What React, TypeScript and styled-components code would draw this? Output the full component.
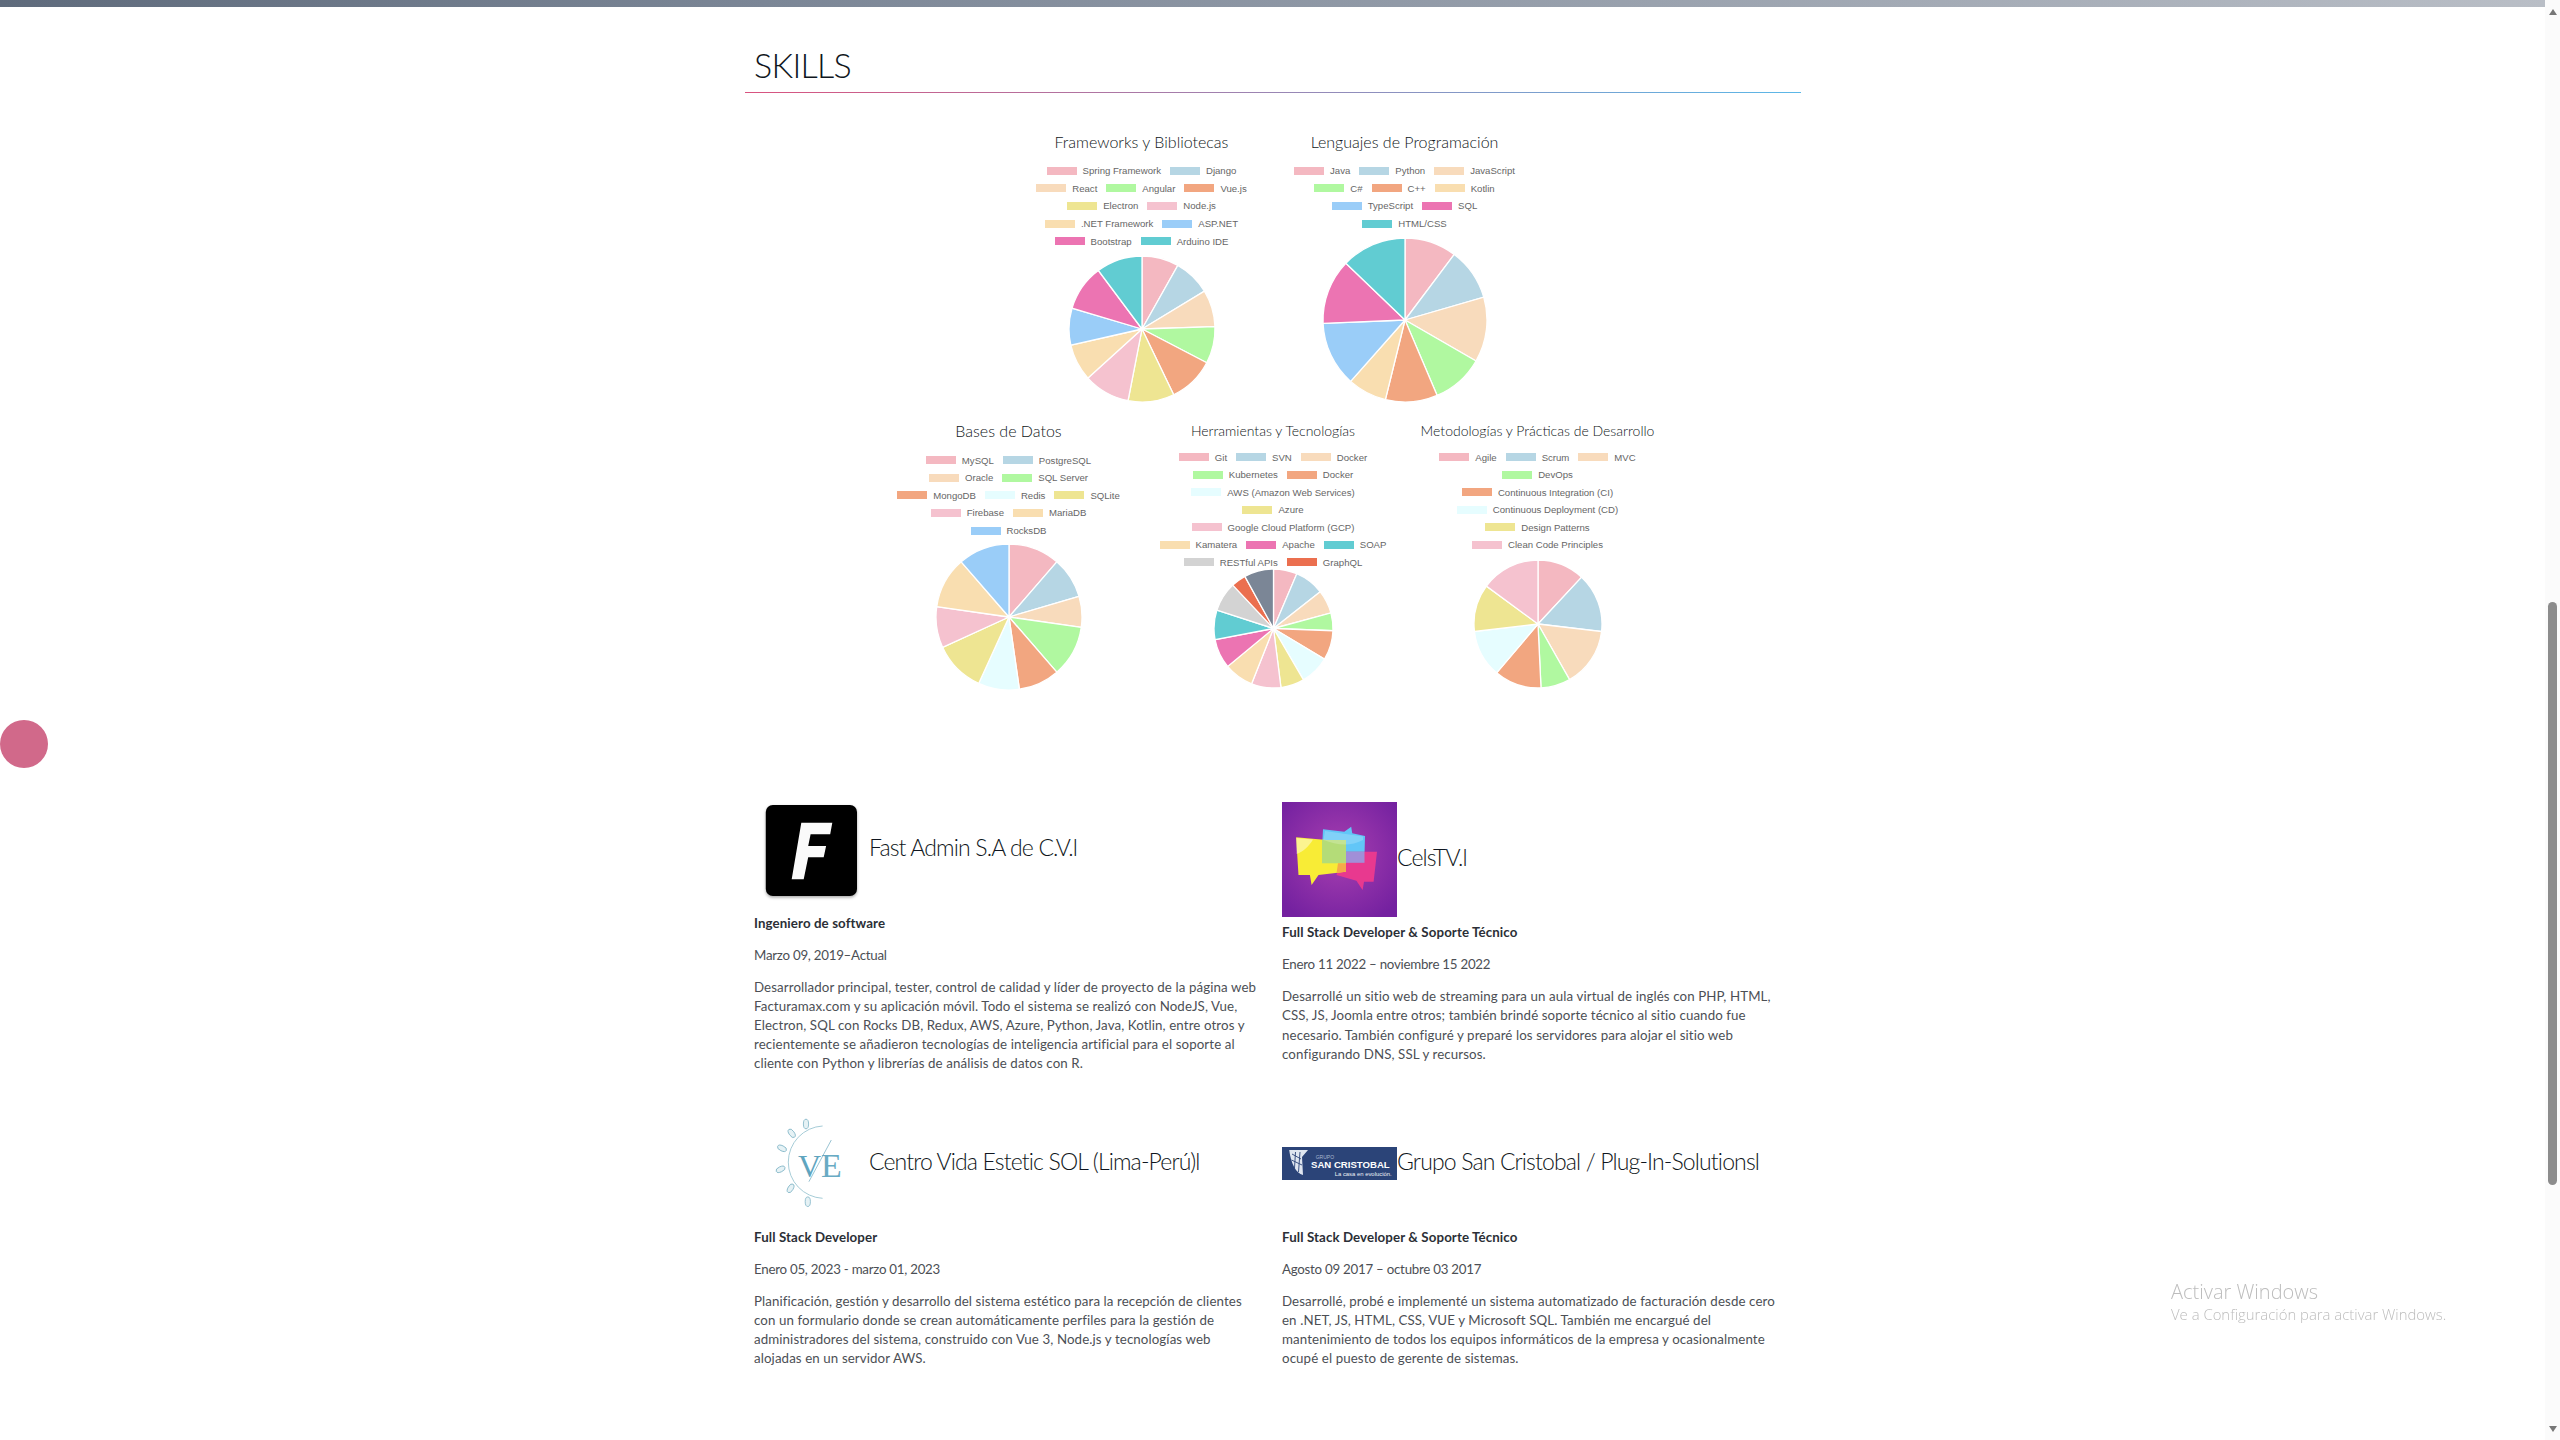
import styled, { createGlobalStyle } from 'styled-components'

const GlobalStyle = createGlobalStyle`
  html, body {
    margin: 0;
    padding: 0;
    background: #fff;
    overflow: hidden;
  }
`

const C = {
  pink: '#f4b8c1',
  blue: '#b6d6e4',
  cream: '#f8dbbc',
  green: '#b0f8a0',
  orange: '#f2a680',
  light: '#e6fdff',
  yellow: '#eee592',
  rose: '#f5c2cf',
  sand: '#f9deb0',
  sky: '#9acdf8',
  magenta: '#ec74b2',
  teal: '#61ccd2',
  gray: '#d3d3d3',
  red: '#eb6f4f',
  slate: '#7b8696',
}

const Page = styled.div`
  display: flex;
  width: 2560px;
  height: 1440px;
  overflow: hidden;
  font-family: Lato, 'Liberation Sans', sans-serif;
`

const Main = styled.main`
  flex: 1;
  padding-left: 1px;
`

const Container = styled.div`
  width: 1056px;
  margin: 0 auto;
`

const Heading = styled.h2`
  margin: 0;
  height: 92px;
  padding: 44px 0 0 9px;
  box-sizing: border-box;
  font-size: 34px;
  line-height: 42px;
  font-weight: 300;
  letter-spacing: -0.7px;
  color: #0f1620;
`

const Divider = styled.div`
  height: 1px;
  background: linear-gradient(90deg, #d9537f, #5bb8e8);
`

const ChartRow = styled.div<{ $top: number }>`
  display: flex;
  justify-content: center;
  margin-top: ${({ $top }) => $top}px;
`

const Chart = styled.section<{ $width: number }>`
  display: flex;
  flex: none;
  flex-direction: column;
  align-items: center;
  width: ${({ $width }) => $width}px;
`

const ChartTitle = styled.h4<{ $small?: boolean }>`
  margin: 0 0 ${({ $small }) => ($small ? 4 : 7)}px;
  height: 26px;
  line-height: 26px;
  font-weight: 300;
  white-space: nowrap;
  color: #0f1620;
  font-size: ${({ $small }) => ($small ? 14 : 16)}px;
`

const LegendRow = styled.div<{ $small?: boolean }>`
  display: flex;
  justify-content: center;
  align-items: center;
  gap: 9px;
  height: ${({ $small }) => ($small ? 17.5 : 17.6)}px;
  white-space: nowrap;
  font-family: 'Liberation Sans', Arial, sans-serif;
  font-size: 9.6px;
  color: #666;
`

const LegendItem = styled.span`
  display: flex;
  align-items: center;
`

const Swatch = styled.i<{ $color: string }>`
  display: block;
  width: 30px;
  height: 8px;
  margin-right: 6px;
  background: ${({ $color }) => $color};
`

const PieSvg = styled.svg<{ $gap: number }>`
  display: block;
  flex: none;
  margin-top: ${({ $gap }) => $gap}px;
`

type Entry = [string, string]

interface PieProps {
  readonly title: string
  readonly width: number
  readonly rows: ReadonlyArray<ReadonlyArray<Entry>>
  readonly values: ReadonlyArray<number>
  readonly colors: ReadonlyArray<string>
  readonly radius: number
  readonly gap: number
  readonly small?: boolean
}

const slicePaths = (values: ReadonlyArray<number>, r: number) => {
  const total = values.reduce((a, b) => a + b, 0)
  const c = r + 2
  let acc = 0
  return values.map(v => {
    const a0 = (acc / total) * Math.PI * 2
    acc += v
    const a1 = (acc / total) * Math.PI * 2
    const x0 = c + r * Math.sin(a0)
    const y0 = c - r * Math.cos(a0)
    const x1 = c + r * Math.sin(a1)
    const y1 = c - r * Math.cos(a1)
    return `M${c} ${c}L${x0.toFixed(2)} ${y0.toFixed(2)}A${r} ${r} 0 0 1 ${x1.toFixed(2)} ${y1.toFixed(2)}Z`
  })
}

const PieChart = ({ title, width, rows, values, colors, radius, gap, small }: PieProps) => (
  <Chart $width={width}>
    <ChartTitle $small={small}>{title}</ChartTitle>
    <div>
      {rows.map((row, i) => (
        <LegendRow key={i} $small={small}>
          {row.map(([label, color], j) => (
            <LegendItem key={j}>
              <Swatch $color={color} />
              {label}
            </LegendItem>
          ))}
        </LegendRow>
      ))}
    </div>
    <PieSvg $gap={gap} width={radius * 2 + 4} height={radius * 2 + 4}>
      {slicePaths(values, radius).map((d, i) => (
        <path key={i} d={d} fill={colors[i]} stroke="#fff" strokeWidth={1.3} />
      ))}
    </PieSvg>
  </Chart>
)

const JobGrid = styled.div`
  display: grid;
  grid-template-columns: 528px 528px;
  align-items: center;
  row-gap: 33px;
  margin-top: 100px;
`

const Job = styled.article`
  padding-left: 9px;
`

const JobHeader = styled.header`
  display: flex;
  align-items: center;
  height: 115px;
`

const LogoSvg = styled.svg`
  display: block;
  flex: none;
`

const CompanyName = styled.h3`
  margin: 0 0 5px;
  font-size: 23px;
  font-weight: 300;
  line-height: 30px;
  letter-spacing: -0.85px;
  white-space: nowrap;
  color: #0f1620;
`

const Role = styled.p`
  margin: 6.5px 0 13px;
  font-size: 13.3px;
  line-height: 19px;
  font-weight: 700;
  letter-spacing: 0.1px;
  color: #2b2f36;
`

const Period = styled.p`
  margin: 0 0 13px;
  font-size: 13.3px;
  line-height: 19px;
  letter-spacing: -0.25px;
  color: #4c4f55;
`

const Description = styled.p`
  margin: 0;
  color: #4c4f55;
  font-size: 13.3px;
  line-height: 19.1px;
  letter-spacing: 0.1px;
`

const DescLine = styled.span`
  display: block;
  white-space: nowrap;
`

const FastLogo = () => (
  <LogoSvg width={115} height={115} viewBox="0 0 115 115">
    <defs>
      <filter id="fastShadow" x="-10%" y="-10%" width="120%" height="120%">
        <feDropShadow dx="0" dy="1.5" stdDeviation="1.5" floodOpacity="0.35" />
      </filter>
    </defs>
    <rect x="11.8" y="13" width="91.2" height="91" rx="7" fill="#000" filter="url(#fastShadow)" />
    <path d="M47.3 30.7H78.3L76.2 42.3H56.6L54.2 54H72.1L69.7 65.3H54.2L49.7 87.3H37.7Z" fill="#fafafa" />
  </LogoSvg>
)

const CelsLogo = () => (
  <LogoSvg width={115} height={115} viewBox="0 0 115 115">
    <defs>
      <radialGradient id="celsBg" cx="50%" cy="45%" r="65%">
        <stop offset="0%" stopColor="#a83fb0" />
        <stop offset="100%" stopColor="#7421a0" />
      </radialGradient>
    </defs>
    <rect width="115" height="115" fill="url(#celsBg)" />
    <path d="M41 27.3L62.3 29.7L69.2 24.7L70.2 31.3L83 34L82.3 60.7L39.3 61.3Z" fill="#62c6f7" />
    <path d="M54.4 73L64 49.7H95L91.6 79.7H82L80.6 88L74.4 78.7Z" fill="#e8398f" />
    <path d="M14.1 35.3L64 39.7V69.7L36.5 73L29.6 83L27.9 73H16.5Z" fill="#f8ec36" />
    <rect x="40" y="38" width="24" height="23.3" fill="#b4dc78" />
    <rect x="64" y="50" width="18.5" height="10.8" fill="#a18fd8" />
    <path d="M56 61.3H64V69.7L54.6 70.8Z" fill="#f5a94a" />
    <path d="M14.3 36L31 37.5C27 44 21 50 14.6 52Z" fill="#fff" opacity="0.45" />
    <path d="M43 29L81 34.5V38C68 45 54 43 41.5 38Z" fill="#fff" opacity="0.2" />
  </LogoSvg>
)

const VidaLogo = () => {
  const leaves: ReadonlyArray<[number, number, number]> = [
    [52, 18, 0],
    [37.7, 27.3, -35],
    [28, 42.3, -65],
    [26.6, 63.3, 65],
    [36.6, 82.3, 30],
    [53.8, 95.7, 0],
  ]
  return (
    <LogoSvg width={115} height={115} viewBox="0 0 115 115">
      <path d="M68.6 20A36.2 36.2 0 0 0 68.6 92.3" fill="none" stroke="#9cc6d3" strokeWidth="0.9" />
      {leaves.map(([x, y, r], i) => (
        <ellipse
          key={i}
          cx={x}
          cy={y}
          rx="2.6"
          ry="4.8"
          fill="#e6f2f5"
          stroke="#7fb4c6"
          strokeWidth="0.8"
          transform={`rotate(${r} ${x} ${y})`}
        />
      ))}
      <path d="M77.3 34L54.9 75.7" stroke="#7fb4c6" strokeWidth="0.8" />
      <text x="44" y="71.3" fontFamily="'Liberation Serif', serif" fontSize="32" fill="#5fa5bf">
        V
      </text>
      <text x="67" y="71.3" fontFamily="'Liberation Serif', serif" fontSize="34" fill="#69abc4">
        E
      </text>
    </LogoSvg>
  )
}

const CristobalLogo = () => (
  <LogoSvg width={115} height={33} viewBox="0 0 115 33">
    <rect width="115" height="33" fill="#2b4478" />
    <path d="M7.2 3H26L20 10L21 28C14 26 9 17 7.2 3Z" fill="#dfe6f0" />
    <path d="M10 7L19 12M9.5 13L20 18M13.5 5L12.5 21M18 5L16.5 25" stroke="#2b4478" strokeWidth="0.9" fill="none" />
    <text x="33.7" y="11.5" fontFamily="'Liberation Sans', sans-serif" fontSize="5" fill="#a9b7cf">
      GRUPO
    </text>
    <text x="29" y="21" fontFamily="'Liberation Sans', sans-serif" fontSize="9.6" fontWeight="700" fill="#fff">
      SAN CRISTOBAL
    </text>
    <text x="52.7" y="28.5" fontFamily="'Liberation Sans', sans-serif" fontSize="5.9" fill="#eef1f6">
      La casa en evolución.
    </text>
  </LogoSvg>
)

const ScrollTrack = styled.aside`
  display: flex;
  flex: none;
  flex-direction: column;
  align-items: center;
  width: 15px;
  height: 1440px;
  background: #fbfbfb;
`

const ArrowUp = styled.div`
  width: 0;
  height: 0;
  margin-top: 9px;
  border: 4.5px solid transparent;
  border-top: 0;
  border-bottom: 6px solid #777;
`

const ArrowDown = styled.div`
  width: 0;
  height: 0;
  margin-bottom: 8px;
  border: 4.5px solid transparent;
  border-bottom: 0;
  border-top: 6px solid #777;
`

const Thumb = styled.div`
  width: 9px;
  height: 583px;
  margin-top: 587px;
  margin-bottom: auto;
  border-radius: 5px;
  background: #8c8c8c;
`

const ProgressBar = styled.div`
  position: fixed;
  top: 0;
  left: 0;
  width: 2545px;
  height: 7px;
  background: linear-gradient(90deg, #5f6b7c, #7b8696 30%, #b9bec6);
`

const FloatingDot = styled.div`
  position: fixed;
  top: 720px;
  left: 0;
  width: 48px;
  height: 48px;
  border-radius: 50%;
  background: #d1698a;
`

const Watermark = styled.div`
  position: fixed;
  top: 1278px;
  left: 2171px;
  font-family: 'Open Sans', 'Noto Sans', sans-serif;
  font-weight: 300;
  color: #bdbdbd;
`

const WatermarkTitle = styled.div`
  font-size: 20px;
  line-height: 27px;
`

const WatermarkText = styled.div`
  font-size: 14.9px;
  line-height: 19px;
`

const rowsOf = (...rows: Entry[][]) => rows

const App = () => (
  <Page>
    <GlobalStyle />
    <ProgressBar />
    <FloatingDot />
    <Main>
      <Container>
        <Heading>SKILLS</Heading>
        <Divider />
        <ChartRow $top={36}>
          <PieChart
            title="Frameworks y Bibliotecas"
            width={263}
            radius={73}
            gap={4}
            values={[8, 8, 8, 8, 10, 10, 10, 8, 8, 10, 10]}
            colors={[C.pink, C.blue, C.cream, C.green, C.orange, C.yellow, C.rose, C.sand, C.sky, C.magenta, C.teal]}
            rows={rowsOf(
              [['Spring Framework', C.pink], ['Django', C.blue]],
              [['React', C.cream], ['Angular', C.green], ['Vue.js', C.orange]],
              [['Electron', C.yellow], ['Node.js', C.rose]],
              [['.NET Framework', C.sand], ['ASP.NET', C.sky]],
              [['Bootstrap', C.magenta], ['Arduino IDE', C.teal]],
            )}
          />
          <PieChart
            title="Lenguajes de Programación"
            width={263}
            radius={82}
            gap={4}
            values={[8, 8, 10, 8, 8, 6, 10, 10, 10]}
            colors={[C.pink, C.blue, C.cream, C.green, C.orange, C.sand, C.sky, C.magenta, C.teal]}
            rows={rowsOf(
              [['Java', C.pink], ['Python', C.blue], ['JavaScript', C.cream]],
              [['C#', C.green], ['C++', C.orange], ['Kotlin', C.sand]],
              [['TypeScript', C.sky], ['SQL', C.magenta]],
              [['HTML/CSS', C.teal]],
            )}
          />
        </ChartRow>
        <ChartRow $top={14}>
          <PieChart
            title="Bases de Datos"
            width={264.5}
            radius={73}
            gap={3}
            values={[10, 8, 6, 10, 8, 8, 10, 8, 10, 10]}
            colors={[C.pink, C.blue, C.cream, C.green, C.orange, C.light, C.yellow, C.rose, C.sand, C.sky]}
            rows={rowsOf(
              [['MySQL', C.pink], ['PostgreSQL', C.blue]],
              [['Oracle', C.cream], ['SQL Server', C.green]],
              [['MongoDB', C.orange], ['Redis', C.light], ['SQLite', C.yellow]],
              [['Firebase', C.rose], ['MariaDB', C.sand]],
              [['RocksDB', C.sky]],
            )}
          />
          <PieChart
            title="Herramientas y Tecnologías"
            width={264.5}
            radius={59.5}
            gap={-4}
            small
            values={[8, 10, 8, 6, 10, 10, 8, 10, 10, 10, 10, 10, 5, 10]}
            colors={[C.pink, C.blue, C.cream, C.green, C.orange, C.light, C.yellow, C.rose, C.sand, C.magenta, C.teal, C.gray, C.red, C.slate]}
            rows={rowsOf(
              [['Git', C.pink], ['SVN', C.blue], ['Docker', C.cream]],
              [['Kubernetes', C.green], ['Docker', C.orange]],
              [['AWS (Amazon Web Services)', C.light]],
              [['Azure', C.yellow]],
              [['Google Cloud Platform (GCP)', C.rose]],
              [['Kamatera', C.sand], ['Apache', C.magenta], ['SOAP', C.teal]],
              [['RESTful APIs', C.gray], ['GraphQL', C.red]],
            )}
          />
          <PieChart
            title="Metodologías y Prácticas de Desarrollo"
            width={264.5}
            radius={64}
            gap={5}
            small
            values={[8, 10, 10, 5, 8, 8, 8, 10]}
            colors={[C.pink, C.blue, C.cream, C.green, C.orange, C.light, C.yellow, C.rose]}
            rows={rowsOf(
              [['Agile', C.pink], ['Scrum', C.blue], ['MVC', C.cream]],
              [['DevOps', C.green]],
              [['Continuous Integration (CI)', C.orange]],
              [['Continuous Deployment (CD)', C.light]],
              [['Design Patterns', C.yellow]],
              [['Clean Code Principles', C.rose]],
            )}
          />
        </ChartRow>
        <JobGrid>
          <Job>
            <JobHeader>
              <FastLogo />
              <CompanyName>Fast Admin S.A de C.V.l</CompanyName>
            </JobHeader>
            <Role>Ingeniero de software</Role>
            <Period>Marzo 09, 2019–Actual</Period>
            <Description>
              <DescLine>Desarrollador principal, tester, control de calidad y líder de proyecto de la página web</DescLine>
              <DescLine>Facturamax.com y su aplicación móvil. Todo el sistema se realizó con NodeJS, Vue,</DescLine>
              <DescLine>Electron, SQL con Rocks DB, Redux, AWS, Azure, Python, Java, Kotlin, entre otros y</DescLine>
              <DescLine>recientemente se añadieron tecnologías de inteligencia artificial para el soporte al</DescLine>
              <DescLine>cliente con Python y librerías de análisis de datos con R.</DescLine>
            </Description>
          </Job>
          <Job>
            <JobHeader>
              <CelsLogo />
              <CompanyName>CelsTV.l</CompanyName>
            </JobHeader>
            <Role>Full Stack Developer &amp; Soporte Técnico</Role>
            <Period>Enero 11 2022 – noviembre 15 2022</Period>
            <Description>
              <DescLine>Desarrollé un sitio web de streaming para un aula virtual de inglés con PHP, HTML,</DescLine>
              <DescLine>CSS, JS, Joomla entre otros; también brindé soporte técnico al sitio cuando fue</DescLine>
              <DescLine>necesario. También configuré y preparé los servidores para alojar el sitio web</DescLine>
              <DescLine>configurando DNS, SSL y recursos.</DescLine>
            </Description>
          </Job>
          <Job>
            <JobHeader>
              <VidaLogo />
              <CompanyName>Centro Vida Estetic SOL (Lima-Perú)l</CompanyName>
            </JobHeader>
            <Role>Full Stack Developer</Role>
            <Period>Enero 05, 2023 - marzo 01, 2023</Period>
            <Description>
              <DescLine>Planificación, gestión y desarrollo del sistema estético para la recepción de clientes</DescLine>
              <DescLine>con un formulario donde se crean automáticamente perfiles para la gestión de</DescLine>
              <DescLine>administradores del sistema, construido con Vue 3, Node.js y tecnologías web</DescLine>
              <DescLine>alojadas en un servidor AWS.</DescLine>
            </Description>
          </Job>
          <Job>
            <JobHeader>
              <CristobalLogo />
              <CompanyName>Grupo San Cristobal / Plug-In-Solutionsl</CompanyName>
            </JobHeader>
            <Role>Full Stack Developer &amp; Soporte Técnico</Role>
            <Period>Agosto 09 2017 – octubre 03 2017</Period>
            <Description>
              <DescLine>Desarrollé, probé e implementé un sistema automatizado de facturación desde cero</DescLine>
              <DescLine>en .NET, JS, HTML, CSS, VUE y Microsoft SQL. También me encargué del</DescLine>
              <DescLine>mantenimiento de todos los equipos informáticos de la empresa y ocasionalmente</DescLine>
              <DescLine>ocupé el puesto de gerente de sistemas.</DescLine>
            </Description>
          </Job>
        </JobGrid>
      </Container>
    </Main>
    <ScrollTrack>
      <ArrowUp />
      <Thumb />
      <ArrowDown />
    </ScrollTrack>
    <Watermark>
      <WatermarkTitle>Activar Windows</WatermarkTitle>
      <WatermarkText>Ve a Configuración para activar Windows.</WatermarkText>
    </Watermark>
  </Page>
)

export default App
